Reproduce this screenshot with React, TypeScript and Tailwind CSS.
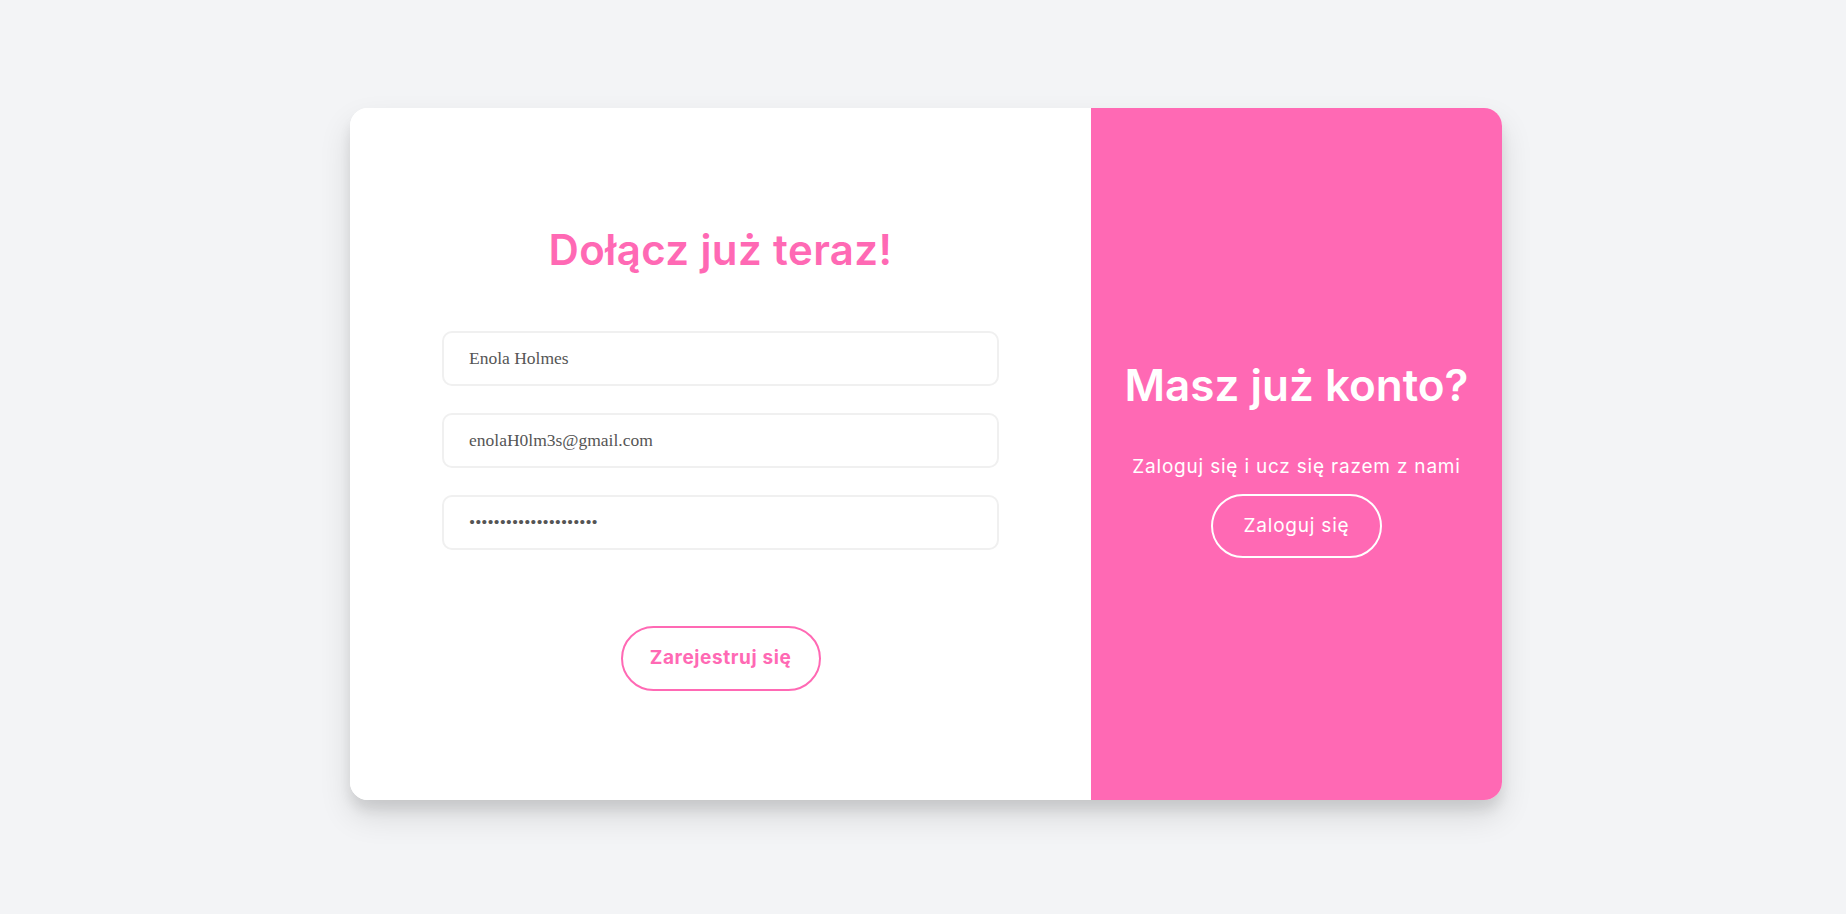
export default function App() {
  return (
    <div className="min-h-screen w-full bg-[#f3f4f6] flex items-center justify-center pb-[6px] pl-[6px]">
      <div className="flex w-[1152px] h-[692px] rounded-[18px] bg-white shadow-[0_16px_32px_rgba(0,0,0,0.12),0_10px_12px_rgba(0,0,0,0.08)] overflow-hidden">
        <div className="flex w-[741px] flex-col items-center justify-center bg-white pt-[9px]">
          <h1 className="font-['Inter',sans-serif] text-[42px] leading-[48px] font-semibold tracking-[0.4px] text-[#ff69b4]">
            Dołącz już teraz!
          </h1>
          <form className="mt-[57px] flex flex-col gap-[27px]">
            <input
              type="text"
              defaultValue="Enola Holmes"
              className="h-[55px] w-[557px] rounded-[10px] border-2 border-[#f0f0f0] px-[25px] font-['Liberation_Serif',serif] text-[17.5px] text-[#555] outline-none"
            />
            <input
              type="email"
              defaultValue="enolaH0lm3s@gmail.com"
              className="h-[55px] w-[557px] rounded-[10px] border-2 border-[#f0f0f0] px-[25px] font-['Liberation_Serif',serif] text-[17.5px] text-[#555] outline-none"
            />
            <input
              type="password"
              defaultValue="enolaholmes1234567890"
              className="h-[55px] w-[557px] rounded-[10px] border-2 border-[#f0f0f0] px-[25px] font-['Liberation_Serif',serif] text-[17.5px] text-[#555] outline-none"
            />
          </form>
          <button className="mt-[76px] h-[65px] w-[200px] rounded-full border-2 border-[#ff69b4] font-['Inter',sans-serif] text-[19px] font-bold tracking-[0.6px] text-[#ff69b4]">
            Zarejestruj się
          </button>
        </div>
        <div className="flex flex-1 flex-col items-center justify-center bg-[#ff69b4] pt-[9px] text-white">
          <h2 className="font-['Inter',sans-serif] text-[44px] leading-[53px] font-semibold">
            Masz już konto?
          </h2>
          <p className="mt-[41px] font-['Inter',sans-serif] text-[19px] leading-[27px] tracking-[0.8px]">
            Zaloguj się i ucz się razem z nami
          </p>
          <button className="mt-[14px] h-[64px] w-[171px] rounded-full border-2 border-white font-['Inter',sans-serif] text-[19px] tracking-[0.8px]">
            Zaloguj się
          </button>
        </div>
      </div>
    </div>
  );
}
